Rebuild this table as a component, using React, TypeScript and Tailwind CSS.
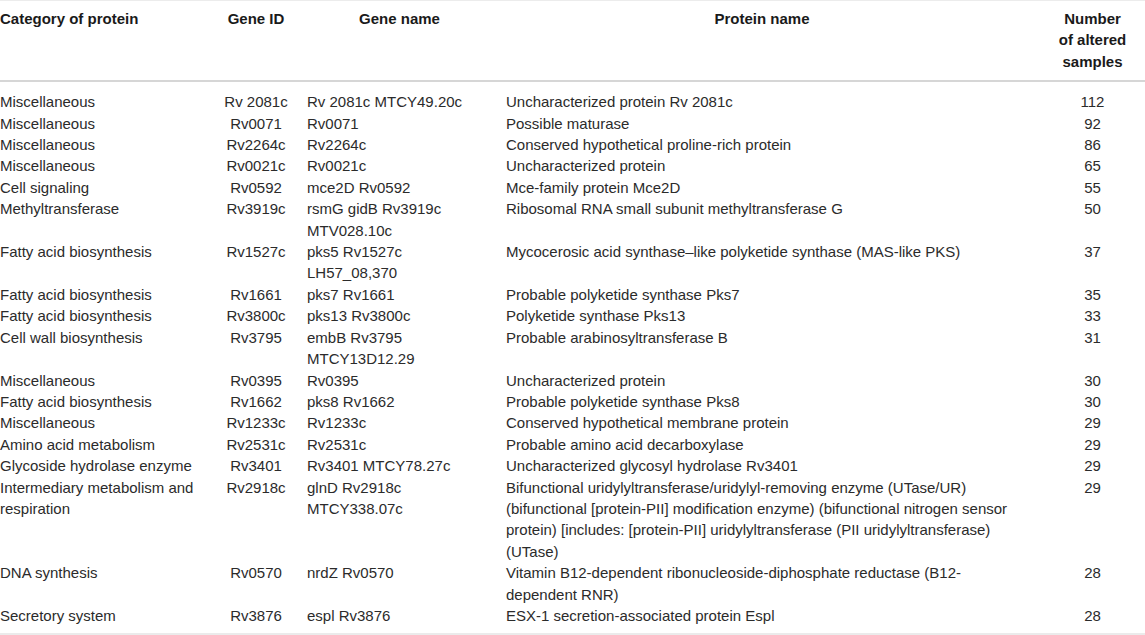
import React from 'react';

type Row = {
  category: string[];
  geneId: string;
  geneName: string[];
  protein: string[];
  count: number;
};

const rows: Row[] = [
  { category: ['Miscellaneous'], geneId: 'Rv 2081c', geneName: ['Rv 2081c MTCY49.20c'], protein: ['Uncharacterized protein Rv 2081c'], count: 112 },
  { category: ['Miscellaneous'], geneId: 'Rv0071', geneName: ['Rv0071'], protein: ['Possible maturase'], count: 92 },
  { category: ['Miscellaneous'], geneId: 'Rv2264c', geneName: ['Rv2264c'], protein: ['Conserved hypothetical proline-rich protein'], count: 86 },
  { category: ['Miscellaneous'], geneId: 'Rv0021c', geneName: ['Rv0021c'], protein: ['Uncharacterized protein'], count: 65 },
  { category: ['Cell signaling'], geneId: 'Rv0592', geneName: ['mce2D Rv0592'], protein: ['Mce-family protein Mce2D'], count: 55 },
  { category: ['Methyltransferase'], geneId: 'Rv3919c', geneName: ['rsmG gidB Rv3919c', 'MTV028.10c'], protein: ['Ribosomal RNA small subunit methyltransferase G'], count: 50 },
  { category: ['Fatty acid biosynthesis'], geneId: 'Rv1527c', geneName: ['pks5 Rv1527c', 'LH57_08,370'], protein: ['Mycocerosic acid synthase–like polyketide synthase (MAS-like PKS)'], count: 37 },
  { category: ['Fatty acid biosynthesis'], geneId: 'Rv1661', geneName: ['pks7 Rv1661'], protein: ['Probable polyketide synthase Pks7'], count: 35 },
  { category: ['Fatty acid biosynthesis'], geneId: 'Rv3800c', geneName: ['pks13 Rv3800c'], protein: ['Polyketide synthase Pks13'], count: 33 },
  { category: ['Cell wall biosynthesis'], geneId: 'Rv3795', geneName: ['embB Rv3795', 'MTCY13D12.29'], protein: ['Probable arabinosyltransferase B'], count: 31 },
  { category: ['Miscellaneous'], geneId: 'Rv0395', geneName: ['Rv0395'], protein: ['Uncharacterized protein'], count: 30 },
  { category: ['Fatty acid biosynthesis'], geneId: 'Rv1662', geneName: ['pks8 Rv1662'], protein: ['Probable polyketide synthase Pks8'], count: 30 },
  { category: ['Miscellaneous'], geneId: 'Rv1233c', geneName: ['Rv1233c'], protein: ['Conserved hypothetical membrane protein'], count: 29 },
  { category: ['Amino acid metabolism'], geneId: 'Rv2531c', geneName: ['Rv2531c'], protein: ['Probable amino acid decarboxylase'], count: 29 },
  { category: ['Glycoside hydrolase enzyme'], geneId: 'Rv3401', geneName: ['Rv3401 MTCY78.27c'], protein: ['Uncharacterized glycosyl hydrolase Rv3401'], count: 29 },
  {
    category: ['Intermediary metabolism and', 'respiration'],
    geneId: 'Rv2918c',
    geneName: ['glnD Rv2918c', 'MTCY338.07c'],
    protein: [
      'Bifunctional uridylyltransferase/uridylyl-removing enzyme (UTase/UR)',
      '(bifunctional [protein-PII] modification enzyme) (bifunctional nitrogen sensor',
      'protein) [includes: [protein-PII] uridylyltransferase (PII uridylyltransferase)',
      '(UTase)',
    ],
    count: 29,
  },
  { category: ['DNA synthesis'], geneId: 'Rv0570', geneName: ['nrdZ Rv0570'], protein: ['Vitamin B12-dependent ribonucleoside-diphosphate reductase (B12-', 'dependent RNR)'], count: 28 },
  { category: ['Secretory system'], geneId: 'Rv3876', geneName: ['espl Rv3876'], protein: ['ESX-1 secretion-associated protein Espl'], count: 28 },
];

const Lines = ({ lines }: { lines: string[] }) => (
  <>
    {lines.map((l, i) => (
      <React.Fragment key={i}>
        {i > 0 && <br />}
        {l}
      </React.Fragment>
    ))}
  </>
);

export default function App() {
  return (
    <div className="w-[1145px] h-[635px] bg-white overflow-hidden font-['Liberation_Sans',Arial,sans-serif] text-[15px] leading-[21.4px]">
      <table className="w-[1145px] table-fixed border-collapse border-t border-t-[#ececec] border-b-2 border-b-[#ebebeb]">
        <colgroup>
          <col className="w-[210px]" />
          <col className="w-[92px]" />
          <col className="w-[190px]" />
          <col className="w-[526px]" />
          <col className="w-[127px]" />
        </colgroup>
        <thead>
          <tr className="border-b-2 border-b-[#d6d6d6] text-[#1a1a1a] font-bold align-top">
            <th className="text-left font-bold pt-[7px] pb-[8px] whitespace-nowrap">Category of protein</th>
            <th className="text-center font-bold pt-[7px] pb-[8px] whitespace-nowrap">Gene ID</th>
            <th className="text-center font-bold pt-[7px] pb-[8px] pl-[5px] whitespace-nowrap">Gene name</th>
            <th className="text-center font-bold pt-[7px] pb-[8px] pl-[14px] whitespace-nowrap">Protein name</th>
            <th className="text-center font-bold pt-[7px] pb-[8px] pl-[22px] whitespace-nowrap">
              Number
              <br />
              of altered
              <br />
              samples
            </th>
          </tr>
        </thead>
        <tbody className="text-[#2b2b2b]">
          {rows.map((r, i) => {
            const pad = i === 0 ? 'pt-[9px]' : i === rows.length - 1 ? 'pb-[7px]' : '';
            return (
              <tr key={i} className="align-top">
                <td className={`text-left whitespace-nowrap ${pad}`}>
                  <Lines lines={r.category} />
                </td>
                <td className={`text-center whitespace-nowrap ${pad}`}>{r.geneId}</td>
                <td className={`text-left pl-[5px] whitespace-nowrap ${pad}`}>
                  <Lines lines={r.geneName} />
                </td>
                <td className={`text-left pl-[14px] whitespace-nowrap ${pad}`}>
                  <Lines lines={r.protein} />
                </td>
                <td className={`text-center pl-[22px] whitespace-nowrap ${pad}`}>{r.count}</td>
              </tr>
            );
          })}
        </tbody>
      </table>
    </div>
  );
}
